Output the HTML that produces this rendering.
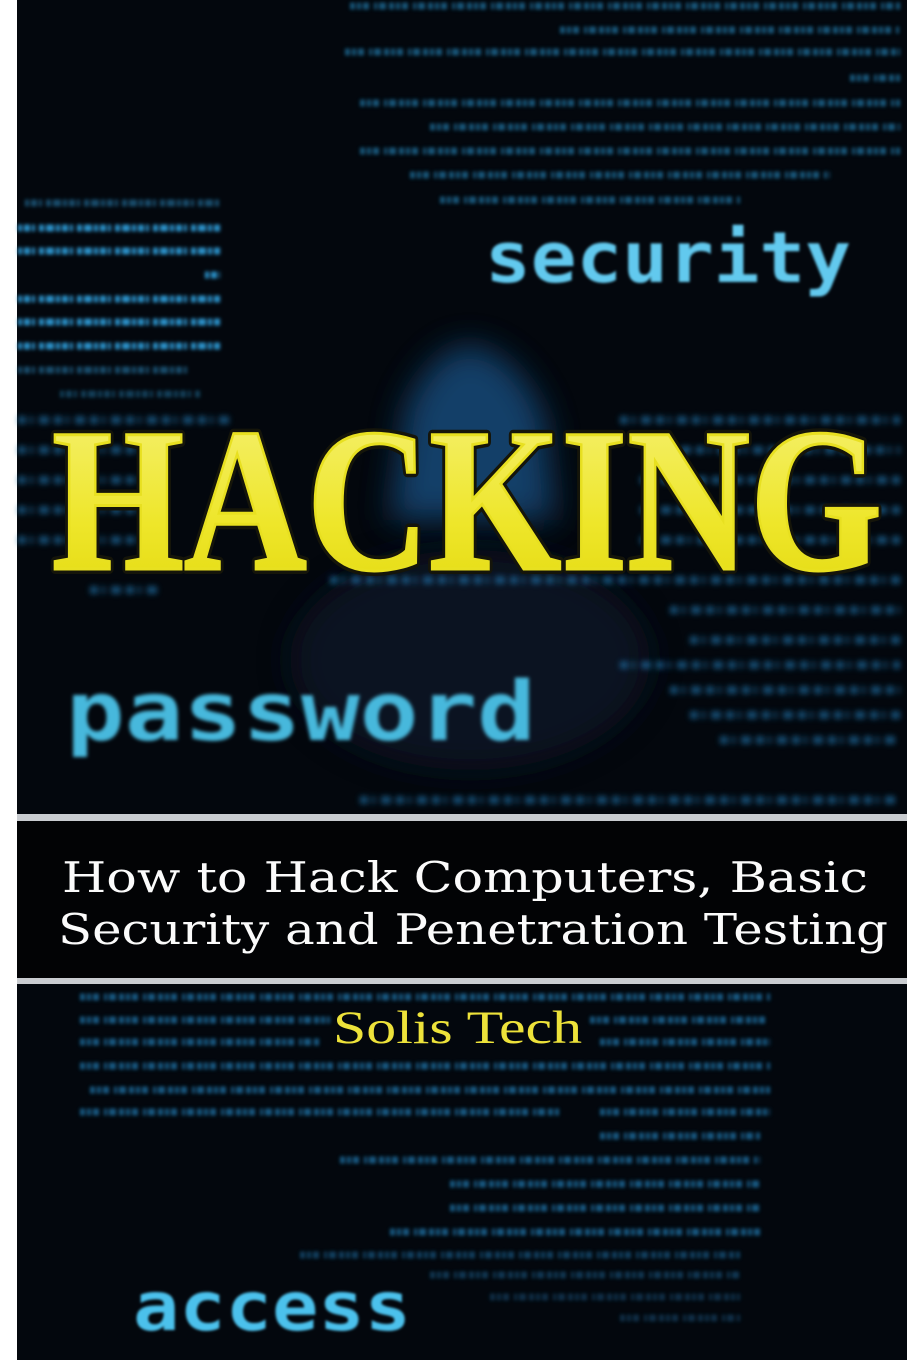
<!DOCTYPE html>
<html><head><meta charset="utf-8"><style>
html,body{margin:0;padding:0;background:#fff;}
svg{display:block}
</style></head><body>
<svg width="907" height="1360" viewBox="0 0 907 1360" xmlns="http://www.w3.org/2000/svg">
<defs>
<filter id="b1" filterUnits="userSpaceOnUse" x="0" y="0" width="907" height="1360"><feGaussianBlur stdDeviation="1.8"/></filter>
<filter id="b2" filterUnits="userSpaceOnUse" x="0" y="0" width="907" height="1360"><feGaussianBlur stdDeviation="3"/></filter>
<filter id="b6" filterUnits="userSpaceOnUse" x="0" y="0" width="907" height="1360"><feGaussianBlur stdDeviation="16"/></filter>
<filter id="glow" filterUnits="userSpaceOnUse" x="0" y="0" width="907" height="1360"><feGaussianBlur stdDeviation="1.3"/></filter>
<linearGradient id="yel" x1="0" y1="0" x2="0" y2="1">
<stop offset="0" stop-color="#f6f27a"/><stop offset="0.6" stop-color="#eee62a"/><stop offset="1" stop-color="#e2d80c"/>
</linearGradient>
</defs>
<rect x="17" y="0" width="890" height="1360" fill="#03070d"/>
<!-- hood figure -->
<path d="M405 410 Q430 350 470 345 Q520 355 545 420 L555 520 L390 520 Z" fill="#184a78" filter="url(#b6)" opacity="0.85"/>
<ellipse cx="470" cy="660" rx="180" ry="110" fill="#0a1828" filter="url(#b6)" opacity="0.8"/>
<!-- code lines -->
<g stroke="#1f6f9c" stroke-width="7" stroke-dasharray="5 2 4 2 6 5 3 2 7 3" filter="url(#b1)" opacity="0.75">
<line x1="350" y1="6" x2="900" y2="6"/>
<line x1="560" y1="30" x2="900" y2="30"/>
<line x1="345" y1="52" x2="900" y2="52"/>
<line x1="850" y1="78" x2="900" y2="78"/>
<line x1="360" y1="103" x2="900" y2="103"/>
<line x1="430" y1="127" x2="900" y2="127"/>
<line x1="360" y1="151" x2="900" y2="151"/>
<line x1="410" y1="175" x2="830" y2="175"/>
<line x1="440" y1="200" x2="740" y2="200"/>
</g>
<g stroke="#2b8fc6" stroke-width="7" stroke-dasharray="4 2 6 2 3 4 5 2 8 2" filter="url(#b1)">
<line x1="25" y1="203" x2="220" y2="203" opacity="0.5"/>
<line x1="18" y1="228" x2="220" y2="228"/>
<line x1="18" y1="251" x2="220" y2="251"/>
<line x1="205" y1="275" x2="220" y2="275"/>
<line x1="18" y1="299" x2="220" y2="299"/>
<line x1="18" y1="322" x2="220" y2="322"/>
<line x1="18" y1="346" x2="220" y2="346"/>
<line x1="18" y1="370" x2="190" y2="370" opacity="0.5"/>
<line x1="60" y1="394" x2="200" y2="394" opacity="0.4"/>
</g>
<g stroke="#1b6fa6" stroke-width="8" stroke-dasharray="8 4 3 6 10 5" filter="url(#b2)" opacity="0.65">
<line x1="18" y1="420" x2="230" y2="420"/>
<line x1="18" y1="450" x2="150" y2="450"/>
<line x1="18" y1="480" x2="140" y2="480"/>
<line x1="18" y1="510" x2="150" y2="510"/>
<line x1="18" y1="540" x2="140" y2="540"/>
<line x1="90" y1="590" x2="160" y2="590"/>
<line x1="620" y1="420" x2="900" y2="420"/>
<line x1="660" y1="450" x2="900" y2="450"/>
<line x1="640" y1="480" x2="900" y2="480"/>
<line x1="640" y1="510" x2="900" y2="510"/>
<line x1="640" y1="540" x2="900" y2="540"/>
<line x1="330" y1="580" x2="900" y2="580"/>
<line x1="670" y1="610" x2="900" y2="610"/>
<line x1="690" y1="640" x2="900" y2="640"/>
<line x1="620" y1="665" x2="900" y2="665"/>
<line x1="670" y1="690" x2="900" y2="690"/>
<line x1="690" y1="715" x2="900" y2="715"/>
<line x1="720" y1="740" x2="900" y2="740"/>
<line x1="360" y1="800" x2="900" y2="800"/>
</g>
<g stroke="#1f73a8" stroke-width="7" stroke-dasharray="5 2 4 2 6 5 3 2 7 3" filter="url(#b1)" opacity="0.75">
<line x1="80" y1="997" x2="770" y2="997"/>
<line x1="80" y1="1020" x2="330" y2="1020"/>
<line x1="590" y1="1020" x2="770" y2="1020"/>
<line x1="80" y1="1042" x2="320" y2="1042"/>
<line x1="600" y1="1042" x2="770" y2="1042"/>
<line x1="80" y1="1066" x2="770" y2="1066"/>
<line x1="90" y1="1090" x2="770" y2="1090"/>
<line x1="80" y1="1112" x2="560" y2="1112"/>
<line x1="600" y1="1112" x2="770" y2="1112"/>
<line x1="600" y1="1136" x2="760" y2="1136"/>
<line x1="340" y1="1160" x2="760" y2="1160"/>
<line x1="450" y1="1184" x2="760" y2="1184"/>
<line x1="450" y1="1208" x2="760" y2="1208"/>
<line x1="390" y1="1232" x2="760" y2="1232"/>
<line x1="300" y1="1255" x2="740" y2="1255" opacity="0.7"/>
<line x1="430" y1="1275" x2="740" y2="1275" opacity="0.6"/>
<line x1="490" y1="1297" x2="740" y2="1297" opacity="0.5"/>
<line x1="620" y1="1318" x2="740" y2="1318" opacity="0.5"/>
</g>
<!-- big words -->
<text x="485" y="282" font-family="'DejaVu Sans Mono','Liberation Mono',monospace" font-weight="bold" font-size="70" fill="#62c9ee" textLength="366" lengthAdjust="spacingAndGlyphs" filter="url(#glow)">security</text>
<text x="66" y="740" font-family="'DejaVu Sans Mono','Liberation Mono',monospace" font-weight="bold" font-size="82" fill="#46b8dc" textLength="470" lengthAdjust="spacingAndGlyphs" filter="url(#b1)">password</text>
<text x="133" y="1330" font-family="'DejaVu Sans Mono','Liberation Mono',monospace" font-weight="bold" font-size="68" fill="#4cc1ec" textLength="278" lengthAdjust="spacingAndGlyphs" filter="url(#glow)">access</text>
<!-- HACKING -->
<text x="52" y="569" font-family="'Liberation Serif',serif" font-weight="bold" font-size="205" fill="#15150a" stroke="#15150a" stroke-width="10" stroke-linejoin="round" textLength="830" lengthAdjust="spacingAndGlyphs">HACKING</text>
<text x="52" y="569" font-family="'Liberation Serif',serif" font-weight="bold" font-size="205" fill="url(#yel)" stroke="#e8e020" stroke-width="3" textLength="830" lengthAdjust="spacingAndGlyphs">HACKING</text>
<!-- band -->
<rect x="17" y="814" width="890" height="7" fill="#c9ccd0"/>
<rect x="17" y="821" width="890" height="157" fill="#020305"/>
<rect x="17" y="978" width="890" height="6" fill="#c9ccd0"/>
<text x="62" y="892" font-family="'DejaVu Serif','Liberation Serif',serif" font-size="42" fill="#fbfbfb" textLength="806" lengthAdjust="spacingAndGlyphs">How to Hack Computers, Basic</text>
<text x="58" y="944" font-family="'DejaVu Serif','Liberation Serif',serif" font-size="42" fill="#fbfbfb" textLength="830" lengthAdjust="spacingAndGlyphs">Security and Penetration Testing</text>
<text x="333" y="1043" font-family="'Liberation Serif',serif" font-size="47" fill="#ede23a" textLength="249" lengthAdjust="spacingAndGlyphs">Solis Tech</text>
</svg>
</body></html>
